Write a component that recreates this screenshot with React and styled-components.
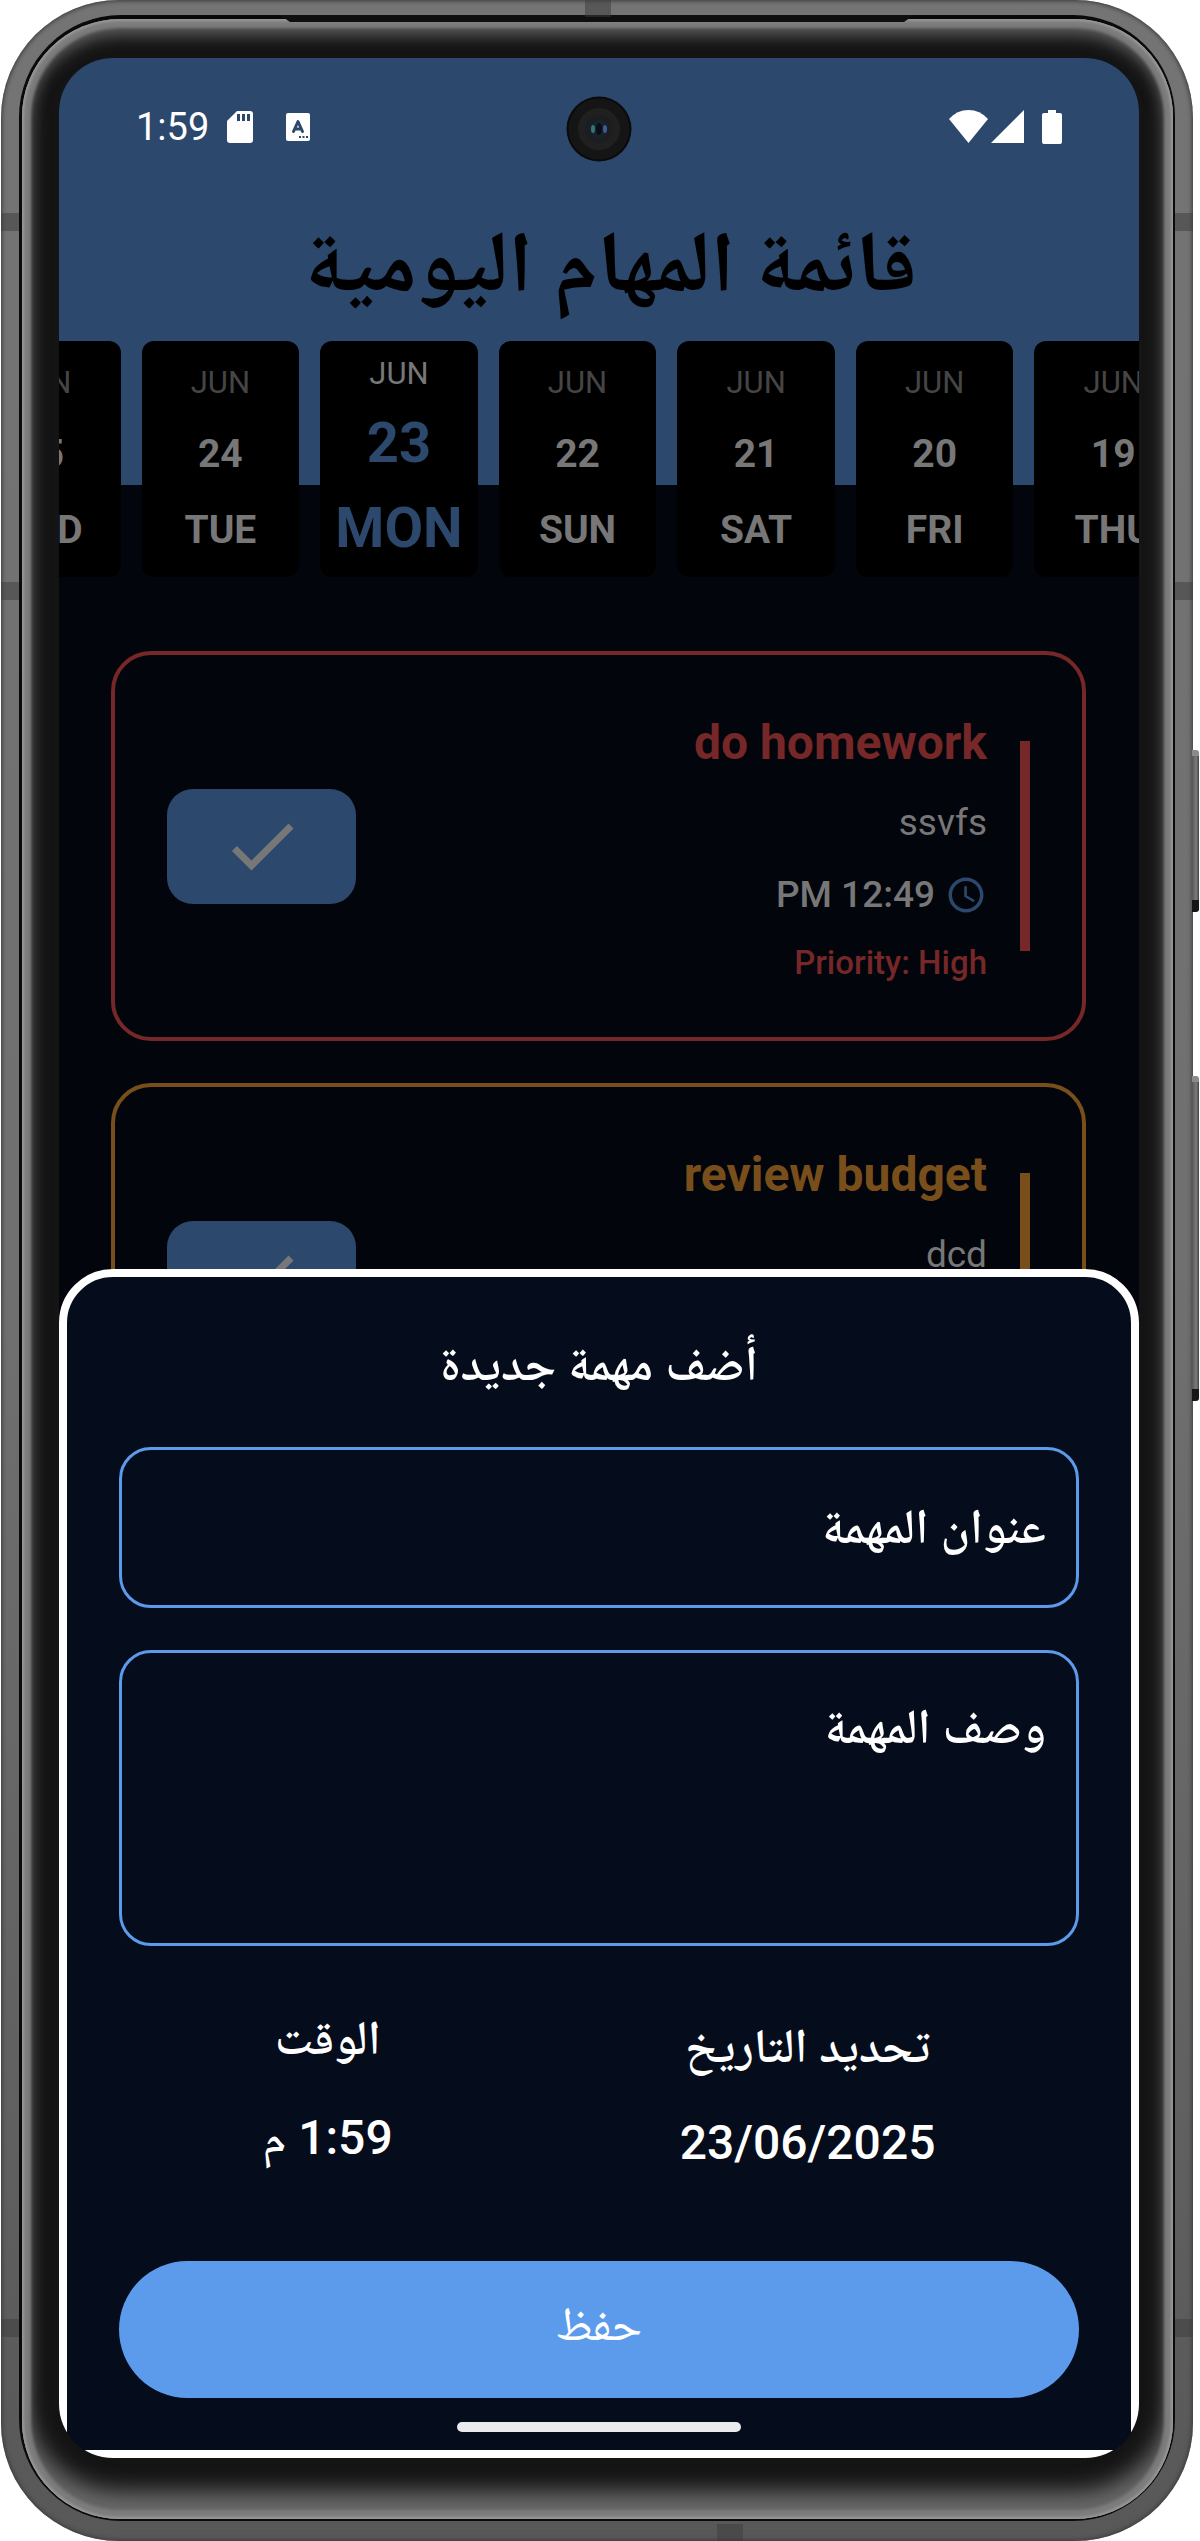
import React from 'react';
import styled, { createGlobalStyle } from 'styled-components';

const c = {
  header: '#2c486c',
  screen: '#03050c',
  sheet: '#050c1b',
  accent: '#5c9bec',
  muted: '#777777',
  faint: '#454545',
  high: '#762727',
  medium: '#784f1b',
};

const GlobalStyle = createGlobalStyle`
  *, *::before, *::after { box-sizing: border-box; }
  body { margin: 0; background: #ffffff; }
  body, button, input, textarea { font-family: Roboto, "Noto Naskh Arabic", "Noto Sans", sans-serif; }
  h1, h2, h3, p, ul { margin: 0; padding: 0; }
  ul { list-style: none; }
`;

/* ---------- Phone body ---------- */

const Page = styled.div`
  display: grid;
  min-height: 100vh;
  padding: 0 7px 0 1px;
`;

const Rim = styled.div`
  position: relative;
  display: grid;
  min-width: 0;
  padding: 15px 18px 20px;
  border-radius: 118px;
  background: linear-gradient(180deg, #747474 0, #707070 50%, #585858 100%);
  box-shadow: inset 0 0 4px 1px #3a3a3a;
`;

const Seam = styled.div`
  display: grid;
  min-width: 0;
  padding: 4px 2px 2px 3px;
  border-radius: 102px;
  background: #0a0a0a;
`;

const Bezel = styled.div`
  display: grid;
  min-width: 0;
  padding: 39px 34px 61px 37px;
  border-radius: 98px;
  background: #141414;
  box-shadow:
    inset 0 0 3px 2px #9a9a9a,
    inset 0 0 3px 9px #7c7c7c,
    inset 0 12px 16px 4px #606060,
    inset 0 -24px 22px 4px #6a6a6a;
`;

const Speaker = styled.span`
  position: absolute;
  top: 15px;
  left: 279px;
  right: 279px;
  height: 7px;
  background: #0f0f0f;
  clip-path: polygon(0 0, 100% 0, calc(100% - 10px) 100%, 10px 100%);
`;

const Antenna = styled.span`
  position: absolute;
  width: ${(p) => (p.$flat ? 26 : 18)}px;
  height: ${(p) => (p.$flat ? 17 : 18)}px;
  top: ${(p) => p.$top || 'auto'};
  bottom: ${(p) => p.$bottom || 'auto'};
  left: ${(p) => p.$left || 'auto'};
  right: ${(p) => p.$right || 'auto'};
  background: rgba(60, 60, 60, 0.5);
`;

const SideKey = styled.span`
  position: absolute;
  top: ${(p) => p.$top}px;
  right: -6px;
  width: 7px;
  height: ${(p) => p.$length}px;
  border-top: 6px solid #8a8a8a;
  border-bottom: 12px solid #161616;
  border-radius: 0 3px 3px 0;
  background: linear-gradient(90deg, #555555, #7c7c7c 60%, #444444);
`;

const Screen = styled.div`
  display: grid;
  min-width: 0;
  overflow: hidden;
  border-radius: 54px;
  background: ${c.screen};
`;

/* ---------- Planner behind the sheet ---------- */

const Planner = styled.main`
  grid-area: 1 / 1;
  min-width: 0;
`;

const Header = styled.header`
  padding-bottom: 161px;
  background: ${c.header};
`;

const StatusBar = styled.div`
  direction: ltr;
  display: grid;
  grid-template-columns: 1fr auto 1fr;
  align-items: center;
  height: 142px;
  padding: 0 77px;
`;

const StatusGroup = styled.div`
  display: flex;
  align-items: center;
  justify-content: ${(p) => (p.$end ? 'flex-end' : 'flex-start')};
  gap: 18px;
  padding-bottom: 4px;
`;

const IconPair = styled.div`
  display: flex;
  align-items: center;
  gap: ${(p) => p.$gap}px;
`;

const StatusTime = styled.span`
  color: #ffffff;
  font-size: 38px;
  line-height: 44px;
`;

const Title = styled.h1`
  color: #000000;
  font-size: 86px;
  font-weight: 700;
  line-height: 124px;
  text-align: center;
  padding-left: 24px;
`;

const DateStrip = styled.div`
  display: grid;
  grid-template-columns: repeat(7, 1fr);
  gap: 21px;
  margin: -144px -53px 0 -96px;
`;

const DayCard = styled.button`
  display: flex;
  flex-direction: column;
  align-items: center;
  justify-content: space-between;
  min-width: 0;
  height: 236px;
  padding: ${(p) => (p.$active ? 15 : 24)}px 0;
  border: 0;
  border-radius: 12px;
  background: #000000;
`;

const Month = styled.span`
  color: ${(p) => (p.$active ? c.muted : c.faint)};
  font-size: 31px;
  line-height: 36px;
`;

const DayText = styled.span`
  color: ${(p) => (p.$active ? c.header : c.muted)};
  font-size: ${(p) => (p.$active ? 56 : 39)}px;
  font-weight: 700;
  line-height: ${(p) => (p.$active ? 67 : 46)}px;
`;

const TaskList = styled.ul`
  display: grid;
  gap: 42px;
  padding: 74px 53px 0 52px;
`;

const TaskCard = styled.li`
  display: flex;
  align-items: center;
  gap: 33px;
  padding: 52px;
  border: 4px solid ${(p) => p.$color};
  border-radius: 40px;
`;

const PriorityBar = styled.span`
  width: 10px;
  height: 210px;
  background: ${(p) => p.$color};
`;

const TaskBody = styled.div`
  display: grid;
  gap: 20px;
  flex: 1;
  padding-top: 2px;
`;

const TaskTitle = styled.h3`
  color: ${(p) => p.$color};
  font-size: 48px;
  font-weight: 700;
  line-height: 68px;
`;

const TaskNote = styled.p`
  color: ${c.muted};
  font-size: 37px;
  line-height: 52px;
`;

const TaskTime = styled.p`
  display: flex;
  align-items: center;
  gap: 10px;
  min-height: 52px;
  color: ${c.muted};
  font-size: 37px;
  font-weight: 500;
  line-height: 52px;
`;

const TaskPriority = styled.p`
  min-height: 44px;
  color: ${(p) => p.$color};
  font-size: 33px;
  font-weight: 500;
  line-height: 44px;
`;

const DoneButton = styled.button`
  display: grid;
  place-items: center;
  width: 189px;
  height: 115px;
  padding: 0;
  border: 0;
  border-radius: 26px;
  background: ${c.header};
`;

/* ---------- Add-task sheet ---------- */

const Sheet = styled.section`
  grid-area: 1 / 1;
  align-self: end;
  z-index: 1;
  min-width: 0;
  padding: 52px 52px 18px;
  border: 8px solid #ffffff;
  border-radius: 54px 54px 0 0;
  background: ${c.sheet};
`;

const SheetTitle = styled.h2`
  margin-bottom: 48px;
  color: #ffffff;
  font-size: 49px;
  font-weight: 600;
  line-height: 70px;
  text-align: center;
`;

const Form = styled.form`
  display: grid;
  gap: 42px;
`;

const fieldStyle = `
  display: block;
  width: 100%;
  border: 3px solid ${c.accent};
  border-radius: 32px;
  outline: 0;
  background: transparent;
  color: #ffffff;
  font-size: 49px;
  font-weight: 600;
  line-height: 70px;
  &::placeholder { color: #ffffff; opacity: 1; }
`;

const TextField = styled.input`
  ${fieldStyle}
  height: 161px;
  padding: 0 30px 2px;
`;

const TextArea = styled.textarea`
  ${fieldStyle}
  height: 296px;
  padding: 39px 30px;
  resize: none;
`;

const Pickers = styled.div`
  display: flex;
  align-items: flex-start;
  justify-content: space-around;
  padding: 20px 0 43px;
`;

const Picker = styled.button`
  display: grid;
  gap: 32px;
  justify-items: center;
  padding: 0;
  border: 0;
  background: none;
  color: #ffffff;
`;

const PickerLabel = styled.span`
  font-size: 48px;
  font-weight: 600;
  line-height: ${(p) => (p.$tall ? 76 : 60)}px;
`;

const PickerValue = styled.span`
  font-size: 48px;
  font-weight: 500;
  line-height: ${(p) => (p.$tall ? 76 : 54)}px;
`;

const SaveButton = styled.button`
  height: 137px;
  border: 0;
  border-radius: 69px;
  background: ${c.accent};
  color: #ffffff;
  font-family: "Noto Naskh Arabic", "Noto Sans", sans-serif;
  font-size: 48px;
  line-height: 70px;
`;

const HomeBar = styled.div`
  width: 284px;
  height: 10px;
  margin: 24px auto 0;
  border-radius: 5px;
  background: #eaebed;
`;

/* ---------- Icons ---------- */

const SdIcon = () => (
  <svg width="26" height="32" viewBox="0 0 26 32" aria-hidden="true">
    <path d="M10 0h13a3 3 0 0 1 3 3v26a3 3 0 0 1-3 3H3a3 3 0 0 1-3-3V10z" fill="#fff" />
    <path d="M10 3h3v7h-3zM15 3h3v7h-3zM20 3h3v7h-3z" fill={c.header} />
  </svg>
);

const KeyboardIcon = () => (
  <svg width="24" height="28" viewBox="0 0 24 28" aria-hidden="true">
    <rect width="24" height="28" rx="2" fill="#fff" />
    <path d="M7.500 18.500 12 8.500 16.500 18.500M9 16h6" fill="none" stroke={c.header} strokeWidth="3" strokeLinecap="round" strokeLinejoin="round" />
    <path d="M13 23h2v2h-2zM16.500 23h2v2h-2zM20 23h2v2h-2z" fill={c.header} />
  </svg>
);

const WifiIcon = () => (
  <svg width="39" height="34" viewBox="0 0 39 34" aria-hidden="true">
    <path d="M0 9Q8 0 19.500 0T39 9L19.500 33z" fill="#fff" />
  </svg>
);

const SignalIcon = () => (
  <svg width="33" height="34" viewBox="0 0 33 34" aria-hidden="true">
    <path d="M33 0v33H0z" fill="#fff" />
  </svg>
);

const BatteryIcon = () => (
  <svg width="20" height="34" viewBox="0 0 20 34" aria-hidden="true">
    <path d="M6 0h8v3h4a2 2 0 0 1 2 2v27a2 2 0 0 1-2 2H2a2 2 0 0 1-2-2V5a2 2 0 0 1 2-2h4z" fill="#fff" />
  </svg>
);

const Camera = () => (
  <svg width="66" height="66" viewBox="0 0 66 66" aria-hidden="true">
    <circle cx="33" cy="33" r="32.500" fill="#0a0a0a" />
    <circle cx="33" cy="33" r="30.500" fill="#151515" />
    <circle cx="33" cy="33" r="21" fill="#202020" />
    <circle cx="33" cy="33" r="14" fill="#1b1d20" />
    <circle cx="33" cy="33" r="9" fill="#16222c" />
    <ellipse cx="27" cy="33" rx="2" ry="4" fill="#37737a" />
    <ellipse cx="39" cy="33" rx="2" ry="4" fill="#435a92" />
    <ellipse cx="33" cy="33" rx="3" ry="6" fill="#0a0d12" />
  </svg>
);

const CheckIcon = () => (
  <svg width="84" height="84" viewBox="0 0 24 24" aria-hidden="true">
    <path d="M9 16.170 4.830 12l-1.420 1.410L9 19 21 7l-1.410-1.410z" fill={c.muted} />
  </svg>
);

const ClockIcon = () => (
  <svg width="42" height="42" viewBox="0 0 24 24" aria-hidden="true">
    <path
      d="M11.990 2C6.470 2 2 6.480 2 12s4.470 10 9.990 10C17.520 22 22 17.520 22 12S17.520 2 11.990 2zM12 20c-4.420 0-8-3.580-8-8s3.580-8 8-8 8 3.580 8 8-3.580 8-8 8zm.5-13H11v6l5.250 3.150.750-1.230-4.500-2.670z"
      fill={c.header}
    />
  </svg>
);

/* ---------- Data ---------- */

const days = [
  { date: '19', day: 'THU' },
  { date: '20', day: 'FRI' },
  { date: '21', day: 'SAT' },
  { date: '22', day: 'SUN' },
  { date: '23', day: 'MON', active: true },
  { date: '24', day: 'TUE' },
  { date: '25', day: 'WED' },
];

const tasks = [
  { title: 'do homework', note: 'ssvfs', time: 'PM 12:49', priority: 'Priority: High', color: c.high },
  { title: 'review budget', note: 'dcd', color: c.medium },
];

function Task({ task }) {
  return (
    <TaskCard $color={task.color}>
      <PriorityBar $color={task.color} />
      <TaskBody>
        <TaskTitle $color={task.color}>{task.title}</TaskTitle>
        <TaskNote>{task.note}</TaskNote>
        <TaskTime>
          <ClockIcon />
          {task.time}
        </TaskTime>
        <TaskPriority $color={task.color}>{task.priority}</TaskPriority>
      </TaskBody>
      <DoneButton type="button" aria-label="done">
        <CheckIcon />
      </DoneButton>
    </TaskCard>
  );
}

export default function App() {
  return (
    <Page>
      <GlobalStyle />
      <Rim>
        <Seam>
          <Bezel>
            <Screen dir="rtl" lang="ar">
              <Planner>
                <Header>
                  <StatusBar>
                    <StatusGroup>
                      <StatusTime>1:59</StatusTime>
                      <IconPair $gap={33}>
                        <SdIcon />
                        <KeyboardIcon />
                      </IconPair>
                    </StatusGroup>
                    <Camera />
                    <StatusGroup $end>
                      <IconPair $gap={3}>
                        <WifiIcon />
                        <SignalIcon />
                      </IconPair>
                      <BatteryIcon />
                    </StatusGroup>
                  </StatusBar>
                  <Title>قائمة المهام اليومية</Title>
                </Header>
                <DateStrip>
                  {days.map((d) => (
                    <DayCard key={d.date} type="button" $active={d.active}>
                      <Month $active={d.active}>JUN</Month>
                      <DayText $active={d.active}>{d.date}</DayText>
                      <DayText $active={d.active}>{d.day}</DayText>
                    </DayCard>
                  ))}
                </DateStrip>
                <TaskList>
                  {tasks.map((t) => (
                    <Task key={t.title} task={t} />
                  ))}
                </TaskList>
              </Planner>
              <Sheet role="dialog" aria-labelledby="sheet-title">
                <SheetTitle id="sheet-title">أضف مهمة جديدة</SheetTitle>
                <Form onSubmit={(e) => e.preventDefault()}>
                  <TextField type="text" aria-label="عنوان المهمة" placeholder="عنوان المهمة" />
                  <TextArea aria-label="وصف المهمة" placeholder="وصف المهمة" />
                  <Pickers>
                    <Picker type="button">
                      <PickerLabel $tall>تحديد التاريخ</PickerLabel>
                      <PickerValue dir="ltr">23/06/2025</PickerValue>
                    </Picker>
                    <Picker type="button">
                      <PickerLabel>الوقت</PickerLabel>
                      <PickerValue $tall>1:59 م</PickerValue>
                    </Picker>
                  </Pickers>
                  <SaveButton type="submit">حفظ</SaveButton>
                </Form>
                <HomeBar />
              </Sheet>
            </Screen>
          </Bezel>
        </Seam>
        <Speaker />
        <Antenna $flat $top="0" $left="584px" />
        <Antenna $flat $bottom="0" $left="716px" />
        <Antenna $top="213px" $left="0" />
        <Antenna $top="213px" $right="0" />
        <Antenna $top="582px" $left="0" />
        <Antenna $top="582px" $right="0" />
        <Antenna $bottom="204px" $left="0" />
        <Antenna $bottom="204px" $right="0" />
        <SideKey $top={750} $length={162} />
        <SideKey $top={1076} $length={325} />
      </Rim>
    </Page>
  );
}
